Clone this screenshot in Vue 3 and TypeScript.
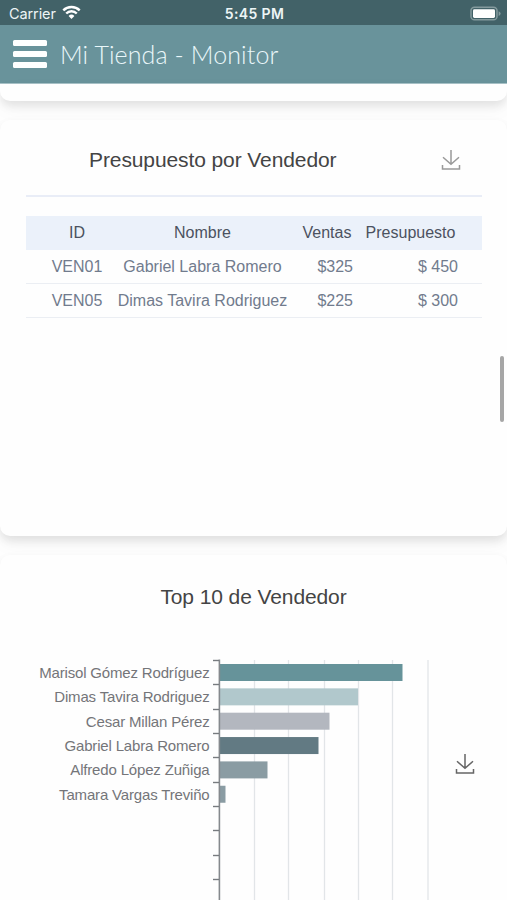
<script setup lang="ts">
interface BudgetRow {
  id: string
  name: string
  sales: string
  budget: string
}

interface SellerBar {
  name: string
  width: number
  color: string
}

const rows: BudgetRow[] = [
  { id: 'VEN01', name: 'Gabriel Labra Romero', sales: '$325', budget: '$ 450' },
  { id: 'VEN05', name: 'Dimas Tavira Rodriguez', sales: '$225', budget: '$ 300' },
]

const sellers: SellerBar[] = [
  { name: 'Marisol Gómez Rodríguez', width: 183, color: '#66939a' },
  { name: 'Dimas Tavira Rodriguez', width: 138.5, color: '#b1c8cc' },
  { name: 'Cesar Millan Pérez', width: 110, color: '#b3b7bf' },
  { name: 'Gabriel Labra Romero', width: 99, color: '#627a83' },
  { name: 'Alfredo López Zuñiga', width: 48, color: '#8a9ca3' },
  { name: 'Tamara Vargas Treviño', width: 6, color: '#8a9ca3' },
]

const rowStep = 24.35
const ticks = Array.from({ length: 10 }, (_, i) => Math.round(21 + i * rowStep))
const gridLines = [254.5, 288.5, 324.5, 358.5, 392.5, 428]
</script>

<template>
  <div class="screen">
    <div class="status">
      <div class="carrier">
        <span>Carrier</span>
        <svg class="wifi" width="19" height="15" viewBox="0 0 19 15">
          <path d="M1.3 5.4a11.6 11.6 0 0 1 16.4 0" />
          <path d="M4.2 8.5a7.5 7.5 0 0 1 10.6 0" />
          <path class="dot" d="M9.5 14 6.6 11a4.1 4.1 0 0 1 5.8 0z" />
        </svg>
      </div>
      <span class="time">5:45 PM</span>
      <svg class="battery" width="31" height="16" viewBox="0 0 31 16">
        <rect x="1" y="1.2" width="26" height="12.6" rx="3.4" fill="none" stroke="#849a9d" stroke-width="1.5" />
        <rect x="3" y="3.2" width="22" height="8.8" rx="1.4" fill="#fff" />
        <path d="M28.6 5.2q2 .8 2 2.4t-2 2.4z" fill="#849a9d" />
      </svg>
    </div>
    <header class="navbar">
      <div class="burger"><i></i><i></i><i></i></div>
      <h1>Mi Tienda - Monitor</h1>
    </header>

    <main>
      <section class="card previous"></section>

      <section class="card budget">
        <div class="card-head">
          <h2>Presupuesto por Vendedor</h2>
          <svg class="download" width="20" height="22" viewBox="0 0 20 22">
            <path d="M10 1v14.3M2 8.3l8 7 8-7M1.5 16v4h17v-4" />
          </svg>
        </div>
        <table>
          <colgroup>
            <col class="c-id" /><col class="c-name" /><col class="c-sales" /><col class="c-budget" />
          </colgroup>
          <thead>
            <tr><th class="id">ID</th><th>Nombre</th><th>Ventas</th><th class="bud">Presupuesto</th></tr>
          </thead>
          <tbody>
            <tr v-for="row in rows" :key="row.id">
              <td class="id">{{ row.id }}</td>
              <td>{{ row.name }}</td>
              <td class="sales">{{ row.sales }}</td>
              <td class="amount">{{ row.budget }}</td>
            </tr>
          </tbody>
        </table>
      </section>

      <section class="card top">
        <h2>Top 10 de Vendedor</h2>
        <div class="chart-row">
          <svg class="chart" width="440" height="264" viewBox="0 0 440 264">
            <line v-for="x in gridLines" :key="x" :x1="x" :x2="x" y1="21" y2="264" stroke="#e2e5e8" stroke-width="1.3" />
            <g v-for="(seller, i) in sellers" :key="seller.name">
              <rect x="219.5" :y="25 + i * rowStep" :width="seller.width" height="17" :fill="seller.color" />
              <text x="209.5" :y="39 + i * rowStep" text-anchor="end">{{ seller.name }}</text>
            </g>
            <line x1="219.4" x2="219.4" y1="20.5" y2="264" stroke="#85898d" stroke-width="1.6" />
            <line v-for="y in ticks" :key="y" x1="213" x2="219" :y1="y + 0.5" :y2="y + 0.5" stroke="#777b7f" stroke-width="1.4" />
          </svg>
          <svg class="download dark" width="20" height="22" viewBox="0 0 20 22">
            <path d="M10 1v14.3M2 8.3l8 7 8-7M1.5 16v4h17v-4" />
          </svg>
        </div>
      </section>
    </main>
    <div class="scroll-thumb"></div>
  </div>
</template>

<style>
body {
  margin: 0;
  overflow: hidden;
}
</style>

<style scoped>
.screen {
  position: relative;
  width: 507px;
  height: 900px;
  overflow: hidden;
  background: #fefefe;
  font-family: "Liberation Sans", Arial, sans-serif;
}
.status {
  display: grid;
  grid-template-columns: 1fr auto 1fr;
  align-items: center;
  height: 25px;
  box-sizing: border-box;
  padding: 2px 6px 0 9px;
  background: #426268;
  color: #edf5f6;
  font: 15px/22px Inter, sans-serif;
}
.carrier {
  display: flex;
  align-items: center;
  gap: 6px;
}
.carrier span {
  font-size: 14.5px;
  letter-spacing: -0.1px;
}
.wifi {
  margin-top: -3px;
  fill: none;
  stroke: #fff;
  stroke-width: 2.4;
}
.wifi .dot {
  fill: #fff;
  stroke: none;
}
.time {
  font-size: 14px;
  font-weight: 600;
  letter-spacing: 0.35px;
  margin-right: 1px;
}
.battery {
  justify-self: end;
}
.navbar {
  display: flex;
  align-items: center;
  gap: 13px;
  height: 59px;
  box-sizing: border-box;
  padding: 0 13px 1px;
  background: #69939b;
  border-bottom: 1px solid #a9c3c8;
}
.burger {
  display: flex;
  flex-direction: column;
  gap: 5px;
}
.burger i {
  width: 34px;
  height: 6px;
  border-radius: 1.5px;
  background: #fff;
}
h1 {
  margin: 0;
  color: #e9f7fa;
  font: 300 25px/34px Lato, sans-serif;
  letter-spacing: 0.1px;
  white-space: nowrap;
}
main {
  display: flex;
  flex-direction: column;
  gap: 19px;
}
.card {
  background: #fefefe;
  border-radius: 10px;
  box-shadow: 0 5px 8px rgba(0, 0, 0, 0.09), 0 8px 20px rgba(0, 0, 0, 0.04);
  box-sizing: border-box;
}
.previous {
  height: 17px;
  border-radius: 0 0 10px 10px;
}
.budget {
  height: 416px;
  padding: 0 25px 0 26px;
}
.card-head {
  display: flex;
  align-items: center;
  justify-content: space-between;
  height: 77px;
  box-sizing: border-box;
  padding: 5px 21px 0 63px;
  border-bottom: 2px solid #e9edf7;
}
h2 {
  margin: 0;
  color: #444;
  font-size: 21px;
  letter-spacing: -0.1px;
  font-weight: 400;
  line-height: 28px;
  white-space: nowrap;
}
.download {
  flex: none;
  fill: none;
  stroke: #999;
  stroke-width: 1.5;
}
.download.dark {
  stroke: #666;
}
table {
  width: 456px;
  margin-top: 19px;
  border-collapse: separate;
  border-spacing: 0;
  table-layout: fixed;
  font-size: 16px;
}
.c-id { width: 84px; }
.c-name { width: 185px; }
.c-sales { width: 64px; }
.c-budget { width: 123px; }
th,
td {
  height: 34px;
  padding: 0;
  box-sizing: border-box;
  text-align: center;
  font-weight: 400;
  white-space: nowrap;
}
th {
  background: #ebf1fa;
  color: #4b5260;
}
td {
  padding-top: 1px;
  border-bottom: 1px solid #ebeef3;
  color: #717b8d;
}
.id { padding-left: 18px; }
.bud { padding-right: 20px; }
.sales {
  padding-right: 6px;
  text-align: right;
}
.amount {
  padding-right: 24px;
  text-align: right;
}
.top {
  height: 380px;
  padding-top: 28px;
}
.top h2 {
  text-align: center;
}
.chart-row {
  display: flex;
  align-items: flex-start;
  gap: 15px;
  margin-top: 28px;
}
.chart {
  flex: none;
}
.chart text {
  fill: #747579;
  font-size: 15px;
  letter-spacing: -0.17px;
}
.chart-row .download {
  margin-top: 114px;
}
.scroll-thumb {
  position: absolute;
  top: 356px;
  right: 3px;
  width: 4px;
  height: 66px;
  border-radius: 2px;
  background: #a6a6a6;
}
</style>
